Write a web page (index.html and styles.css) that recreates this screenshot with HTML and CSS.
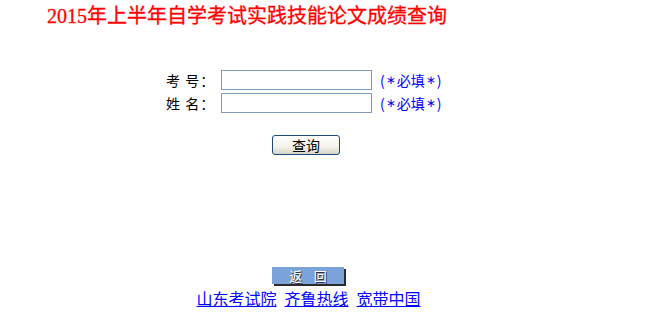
FILE: index.html
```html
<!DOCTYPE html>
<html lang="zh-CN">
<head>
<meta charset="utf-8">
<title>2015年上半年自学考试实践技能论文成绩查询</title>
<link rel="stylesheet" href="styles.css">
</head>
<body>
<div class="page">
  <h1 class="title">2015年上半年自学考试实践技能论文成绩查询</h1>
  <form class="form">
    <div class="row">
      <span class="label">考&nbsp;号：</span>
      <input class="field" type="text">
      <span class="hint">(<span class="star">∗</span>必填<span class="star">∗</span>)</span>
    </div>
    <div class="row">
      <span class="label">姓&nbsp;名：</span>
      <input class="field" type="text">
      <span class="hint">(<span class="star">∗</span>必填<span class="star">∗</span>)</span>
    </div>
    <div class="actions">
      <button class="btn" type="button">查询</button>
    </div>
  </form>
  <div class="footer">
    <a class="back" href="#">返&nbsp;&nbsp;&nbsp;&nbsp;回</a>
    <div class="links">
      <a class="link" href="#">山东考试院</a>
      <a class="link" href="#">齐鲁热线</a>
      <a class="link" href="#">宽带中国</a>
    </div>
  </div>
</div>
</body>
</html>
```

FILE: styles.css
```css
html, body {
  margin: 0;
  padding: 0;
  background: #ffffff;
}
body {
  font-family: "Liberation Serif", "Noto Sans CJK SC", serif;
  color: #000000;
}
.page {
  width: 612px;
  display: flex;
  flex-direction: column;
  align-items: center;
}
.title {
  margin: 0;
  padding: 3px 0 0 0;
  align-self: flex-start;
  margin-left: 47px;
  font-size: 20px;
  line-height: 26px;
  font-weight: normal;
  color: #ff0000;
  white-space: nowrap;
  -webkit-text-stroke: 0.3px #ff0000;
}
.form {
  margin: 41px 0 0 0;
  display: flex;
  flex-direction: column;
  align-items: center;
}
.row {
  display: flex;
  align-items: center;
  height: 20px;
  margin-bottom: 3px;
  margin-left: -2px;
  font-family: "Noto Sans CJK SC", sans-serif;
  font-size: 14px;
  line-height: 20px;
}
.label {
  width: 55px;
  text-align: left;
  white-space: nowrap;
  letter-spacing: 1px;
}
.field {
  box-sizing: border-box;
  width: 151px;
  height: 20px;
  margin: 0 8px 0 0;
  padding: 0 2px;
  border: 1px solid #7f9db9;
  background: #ffffff;
  font-size: 13px;
}
.hint {
  color: #0000ff;
  font-size: 14px;
  white-space: nowrap;
  width: 64px;
  display: flex;
  align-items: center;
}
.star {
  font-family: "DejaVu Sans", sans-serif;
  font-size: 12px;
  padding: 0 1px;
}
.actions {
  margin-top: 19px;
  display: flex;
  justify-content: center;
}
.btn {
  box-sizing: border-box;
  width: 68px;
  height: 20px;
  padding: 0;
  border: 1px solid #1d4a7c;
  border-radius: 3px;
  background: linear-gradient(#ffffff, #f3f2ea 60%, #d8d5c6);
  font-family: "Noto Sans CJK SC", sans-serif;
  font-size: 14px;
  line-height: 18px;
  color: #000000;
}
.footer {
  margin-top: 112px;
  display: flex;
  flex-direction: column;
  align-items: center;
}
.back {
  box-sizing: border-box;
  display: block;
  width: 72px;
  height: 17px;
  margin-left: 4px;
  background: #7ba3d9;
  box-shadow: 2px 2px 0 #2b2b2b;
  color: #ffffff;
  text-decoration: none;
  text-align: center;
  font-family: "Noto Sans CJK SC", sans-serif;
  font-size: 13px;
  line-height: 17px;
  text-shadow: 1px 1px 0 #333333;
}
.links {
  margin-top: 4px;
  margin-left: 5px;
  display: flex;
  gap: 8px;
  font-family: "Noto Sans CJK SC", sans-serif;
  font-size: 16px;
  line-height: 20px;
}
.link {
  color: #0000ff;
  text-decoration: underline;
}
```
